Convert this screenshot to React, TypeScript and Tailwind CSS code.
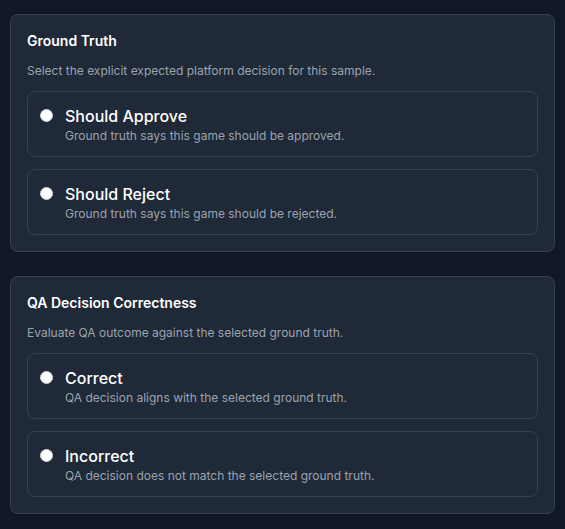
import { useState } from 'react';

type Option = { value: string; label: string; desc: string };

const GROUND_TRUTH: Option[] = [
  { value: 'approve', label: 'Should Approve', desc: 'Ground truth says this game should be approved.' },
  { value: 'reject', label: 'Should Reject', desc: 'Ground truth says this game should be rejected.' },
];

const QA_CORRECTNESS: Option[] = [
  { value: 'correct', label: 'Correct', desc: 'QA decision aligns with the selected ground truth.' },
  { value: 'incorrect', label: 'Incorrect', desc: 'QA decision does not match the selected ground truth.' },
];

function RadioSection({
  name,
  title,
  hint,
  options,
}: {
  name: string;
  title: string;
  hint: string;
  options: Option[];
}) {
  const [value, setValue] = useState<string | null>(null);

  return (
    <section className="rounded-lg border border-[#374151] bg-[#1f2937] p-4">
      <h3 className="text-sm leading-5 font-semibold text-white">{title}</h3>
      <p className="mt-3 text-xs leading-4 text-[#9ca3af]">{hint}</p>

      <div className="mt-3 flex flex-col gap-3">
        {options.map((o) => (
          <label
            key={o.value}
            className="flex cursor-pointer items-start gap-3 rounded-lg border border-[#374151] bg-[#1f2937] p-3"
          >
            <input
              type="radio"
              name={name}
              value={o.value}
              checked={value === o.value}
              onChange={() => setValue(o.value)}
              className="mt-[5px] h-[13px] w-[13px] shrink-0 appearance-none rounded-full border border-[#d1d5db] bg-white"
            />
            <div>
              <div className="text-base leading-6 font-medium text-white">{o.label}</div>
              <div className="text-xs leading-4 text-[#9ca3af]">{o.desc}</div>
            </div>
          </label>
        ))}
      </div>
    </section>
  );
}

export default function App() {
  return (
    <div
      className="min-h-screen bg-[#111827] px-[10px] pt-[14px] pb-4"
      style={{ fontFamily: 'Inter, "Noto Sans", sans-serif' }}
    >
      <div className="flex flex-col gap-6">
        <RadioSection
          name="ground-truth"
          title="Ground Truth"
          hint="Select the explicit expected platform decision for this sample."
          options={GROUND_TRUTH}
        />
        <RadioSection
          name="qa-correctness"
          title="QA Decision Correctness"
          hint="Evaluate QA outcome against the selected ground truth."
          options={QA_CORRECTNESS}
        />
      </div>
    </div>
  );
}
